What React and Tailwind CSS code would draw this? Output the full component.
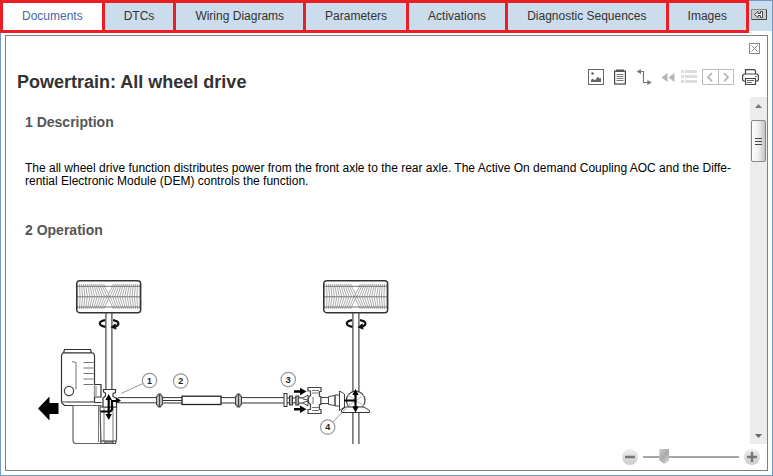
import React, { useState } from 'react';

const tabs = [
    "Documents", "DTCs", "Wiring Diagrams", "Parameters",
    "Activations", "Diagnostic Sequences", "Images",
];

const ToolButton = ({ label, children, wide }) => (
    <button type="button" title={label} aria-label={label} className={`h-4 cursor-pointer ${wide ? "w-[17px]" : "w-4"}`}>
        {children}
    </button>
);

const Toolbar = () => (
    <div className="flex shrink-0 items-center">
        <div className="flex gap-2">
            <ToolButton label="Image">
                <svg viewBox="0 0 16 16" className="size-4" fill="none">
                    <rect x=".5" y=".5" width="15" height="15" stroke="#666" />
                    <circle cx="4.5" cy="4.5" r="1.2" fill="#555" />
                    <path d="M3 13v-2l1.500-1.500 1.800 1.500 1 0 2.700-3.500 1.200 2 1-.8 .8 1V13Z" fill="#666" />
                </svg>
            </ToolButton>
            <ToolButton label="Clipboard">
                <svg viewBox="0 0 16 16" className="size-4" fill="none">
                    <rect x="2.6" y="2" width="10.8" height="13" stroke="#444" strokeWidth="1.2" />
                    <rect x="4" y=".5" width="8" height="2.5" fill="#555" />
                    <path d="M4.5 5.5h7M4.5 7.5h7M4.5 9.5h7M4.5 11.5h7" stroke="#777" />
                </svg>
            </ToolButton>
            <ToolButton label="Route">
                <svg viewBox="0 0 16 16" className="size-4" fill="none">
                    <path d="M4 2.5h3.5v11H12" stroke="#777" strokeWidth="1.2" />
                    <path d="M.5 2.5 5 0v5ZM15.8 13.5l-4.5-2.5v5Z" fill="#777" />
                </svg>
            </ToolButton>
            <ToolButton label="Back">
                <svg viewBox="0 0 16 16" className="size-4" fill="#b5b5b5">
                    <path d="M1.5 8.5l6-4.5v9ZM8.500 8.500l6-4.500v9Z" />
                </svg>
            </ToolButton>
        </div>
        <div className="ml-[5px] flex">
            <ToolButton label="List">
                <svg viewBox="0 0 16 16" className="size-4" fill="#ddd">
                    <path d="M0 1h3v3H0ZM0 6h3v3H0ZM0 11h3v3H0ZM4 1h12v3H4ZM4 6h12v3H4ZM4 11h12v3H4Z" />
                </svg>
            </ToolButton>
        </div>
        <div className="ml-[5px] flex">
            <ToolButton label="Previous">
                <svg viewBox="0 0 16 16" className="size-4" fill="none">
                    <rect x=".5" y=".5" width="16" height="15" stroke="#bbb" />
                    <path d="M10 4 6 8.2l4 4.2" stroke="#b5b5b5" strokeWidth="1.8" />
                </svg>
            </ToolButton>
            <ToolButton label="Next">
                <svg viewBox="0 0 16 16" className="size-4" fill="none">
                    <rect x=".5" y=".5" width="15" height="15" stroke="#bbb" />
                    <path d="m6 4 4 4.2-4 4.2" stroke="#b5b5b5" strokeWidth="1.8" />
                </svg>
            </ToolButton>
        </div>
        <div className="ml-2 flex">
            <ToolButton label="Print" wide>
                <svg viewBox="0 0 17 16" className="h-4 w-[17px]" fill="none" stroke="#444" strokeWidth="1.2">
                    <path d="M3.5 5V.6h9l1 1.400V5" />
                    <path d="M3.5 12h-2L.6 11V6.500L2 5h13l1.400 1.500V11l-.9 1h-2" />
                    <path d="M3.5 9.500h10v6h-10Z" fill="#fff" />
                    <path d="M5 11.500h7M5 13.500h5" stroke="#666" />
                    <path d="M13 7.500h1.500" />
                </svg>
            </ToolButton>
        </div>
    </div>
);

// herringbone tread, steep at the shoulders and leaning in towards the centre
const treads = [...Array(28)].map((_, i) => {
    const side = i < 14 ? -1 : 1;
    const step = i % 14;
    const top = 32.5 + side * (5 + step * 2);
    const middle = top - side * Math.max(0, 6 - step * 0.45);
    return `M${top} 4L${middle} 16.5L${top} 29`;
}).join('');

const Wheel = ({ x }) => (
    <g transform={`translate(${x} 280)`} fill="none">
        <path d={treads} stroke="#999" strokeWidth=".8" />
        <path d="M.5 6.3h64M.5 16.8h64M.5 27h64" stroke="#555" strokeWidth=".8" />
        <rect x=".7" y=".7" width="64" height="32" rx="3" stroke="#333" strokeWidth="1.4" />
    </g>
);

const SpinArrow = ({ x }) => (
    <g transform={`translate(${x} 323.5)`} fill="none" stroke="#111" strokeWidth="2.2">
        <path d="M-4-3.3C-11-2-11 2-3.5 3.300" />
        <path d="M4-3.3C11-2 11 2 5 3.200" />
        <path d="m1.500 3.800 5-4 1 6.500Z" fill="#111" stroke="none" />
    </g>
);

const Callout = ({ x, y, n }) => (
    <g>
        <circle cx={x} cy={y} r="7.2" fill="#fff" stroke="#999" strokeWidth="1.2" />
        <text x={x} y={y + 3} textAnchor="middle" fontSize="9" fontWeight="bold" fill="#222" fontFamily="Liberation Sans, sans-serif">{n}</text>
    </g>
);

const Flange = ({ x }) => (
    <g fill="#bbb" stroke="#444">
        <path d={`M${x - 3} 396h1.500v-2h3v2h1.500v9h-1.500v2h-3v-2h-1.500Z`} />
        <path d={`M${x} 394v13`} />
    </g>
);

const DrivelineDiagram = () => (
    <svg viewBox="30 275 370 169" className="ml-[5px] h-[169px] w-[370px] max-w-full" role="img" aria-label="All wheel drive driveline">
        <Wheel x={76} />
        <Wheel x={323} />

        <g fill="none" stroke="#444" strokeWidth="1.2">
            <path d="M105.900 313v76M111.900 313v76" />
            <path d="M352.900 313v131M358.900 313v131" />
        </g>
        <SpinArrow x={109} />
        <SpinArrow x={356} />

        {/* engine and gearbox */}
        <g fill="#fff" stroke="#333" strokeWidth="1.2">
            <path d="M64.500 349.500h26l1 3.500h-28Z" />
            <path d="M63 353h30q1.500 1 1.500 3v46h-33v-46q0-2 1.500-3Z" />
            <path d="M94.500 384.500h6.500v12.500h-6.500M61.500 402.500l3 3H101M94.500 402.500h7" />
            <path d="M73 405.500v35q0 3 3 3h25v-38Z" stroke="#666" />
            <path d="M100 407h16.500v32l-1 4.500H101Z" stroke="#555" />
            <path d="M103.500 389.500h12v3l-2.500 1v3l3.500 2v8.500h-13.500v-9l2.500-2v-3l-2-1Z" />
            <circle cx="69" cy="391" r="4.600" stroke="#444" />
        </g>
        <g fill="none" stroke="#777">
            <path d="M72 361.500l4 1v27M83.500 362.500h10M83.500 368h10M83.500 373.500h10M83.500 379h10M83.500 384.500h10" />
            <path d="M98.500 406v36M104 408v34M113 408v34M96 386v10" />
            <path d="M101 441h15M105 444v-2h8v2" stroke="#333" />
        </g>

        {/* propeller shaft */}
        <g fill="#fff" stroke="#333">
            <path d="M118 397.600h38M118 402.800h38M162 397.600h20M162 400.500h20M162 403h20M221 397.600h14M221 403h14M242 397.600h42M242 403h42M287 398h17M287 402.800h17" />
            <rect x="182" y="396.200" width="39" height="8.300" stroke="#222" strokeWidth="1.3" />
            <rect x="284" y="393.500" width="3" height="13" />
            <rect x="289.500" y="396" width="3" height="9" fill="#aaa" />
            <rect x="295.800" y="396" width="3" height="9" fill="#aaa" />
        </g>
        <Flange x={159.5} />
        <Flange x={238.5} />

        {/* coupling and rear axle */}
        <g fill="#fff" stroke="#444">
            <path d="M299 398h4l5-3v11l-5-3h-4M303 399l7 1.500-7 2" />
            <path d="M308 387.500h13v4h-1.500v5h1.500v8h-1.500v5h1.500v4h-13v-4h2.500v-5l-2-2v-5l2-2v-4.500H308Z" strokeWidth="1.2" />
            <path d="M312 390.500h7M312 393h7M312 407.500h7M312 410.500h7M313 397v7" stroke="#777" />
            <path d="M321 397.500h7.500v6H321ZM328.500 396.500l6.500-1v10l-6.500-1ZM335 395h4.500v11H335Z" />
            <circle cx="355.700" cy="400.500" r="9.300" stroke="#444" strokeWidth="1.2" />
            <path d="M348 395l16 11M348 406l16-11" stroke="#bbb" />
            <path d="M339.500 391l5 3v13l-5 3.500Z" />
            <path d="M345 407h19l5.500 3.500v2h-28v-2Z" stroke="#333" />
        </g>

        <g fill="none" stroke="#999">
            <path d="M121 393.500 143 383.500" />
            <path d="M333 422 350 404" />
        </g>

        {/* torque flow */}
        <g fill="#000">
            <path d="M38 408.500 49.500 396.500v6.500h9v11h-9v6.500Z" />
            <path d="M294 390.200h6v-2.500l6.500 3.800-6.500 3.800v-2.500h-6ZM294 407.900h6v-2.500l6.500 3.800-6.500 3.800v-2.500h-6Z" />
            <path d="m108.700 394 3.200 6h-6.400ZM108.700 420l3.200-6h-6.400ZM121 400.500l-5-3.200v6.400Z" />
            <path d="m355.500 389 3.200 6h-6.400ZM355.500 412.500l3.200-6h-6.400Z" />
        </g>
        <g fill="none" stroke="#000" strokeWidth="2.2">
            <path d="M108.700 398v18M100.500 411.500h10l1.500-2v-8.500h5" />
            <path d="M355.500 393v16M344 400.500h11.500" />
        </g>

        <Callout x={149.5} y={380.5} n="1" />
        <Callout x={180.7} y={381} n="2" />
        <Callout x={288.3} y={379.5} n="3" />
        <Callout x={327.7} y={427} n="4" />
    </svg>
);

const ScrollBar = () => (
    <div className="flex w-[17px] shrink-0 flex-col bg-[#ececec]">
        <button type="button" aria-label="Scroll up" className="flex h-[17px] items-center justify-center">
            <svg viewBox="0 0 7 4" className="h-1 w-[7px]"><path d="M0 4 3.500 0 7 4Z" fill="#777" /></svg>
        </button>
        <div className="flex-1 pt-[6px]">
            <div className="mx-px flex h-[42px] flex-col items-center justify-center gap-[2px] rounded-xs border border-[#888] bg-linear-to-r from-white via-[#eee] to-[#c4c4c4]">
                <span className="h-px w-[7px] bg-[#444]"></span>
                <span className="h-px w-[7px] bg-[#444]"></span>
                <span className="h-px w-[7px] bg-[#444]"></span>
            </div>
        </div>
        <button type="button" aria-label="Scroll down" className="flex h-[17px] items-center justify-center">
            <svg viewBox="0 0 7 4" className="h-1 w-[7px]"><path d="M0 0h7L3.500 4Z" fill="#666" /></svg>
        </button>
    </div>
);

const App = () => {

    const [activeTab, setActiveTab] = useState("Documents");
    const [zoom, setZoom] = useState(19);

    return (
        <div className="flex h-screen flex-col border border-t-0 border-[#7199c6] bg-white font-['Liberation_Sans',Arial,sans-serif] text-xs text-black">
            <div className="-ml-px flex items-start">
                <nav className="flex border-3 border-l-0 border-[#ee1c23]">
                    {tabs.map((tab) => (
                        <button key={tab} type="button" onClick={() => setActiveTab(tab)}
                            className={`h-[27px] cursor-pointer border-l-3 border-[#ee1c23] px-[19px] pb-[2px] whitespace-nowrap ${tab === activeTab ? "bg-white text-[#4668a8]" : "bg-[#cbdcec] text-[#333]"}`}>
                            {tab}
                        </button>
                    ))}
                </nav>
                <div className="flex h-[31px] flex-1 items-center border-t border-[#7199c6] bg-[#cbdcec] pl-[2px]">
                    <button type="button" aria-label="Collapse" className="-mt-1 cursor-pointer">
                        <svg viewBox="0 0 16 11" className="h-[11px] w-4">
                            <rect x=".5" y=".5" width="15" height="10" fill="#ccc" stroke="#888" />
                            <path d="M1 10.500h14.500V1" fill="none" stroke="#444" />
                            <path d="M3.500 5.500 7 2.500v2h2.500v-2h2v6h-2v-2H7v2Z" fill="#fff" stroke="#333" strokeWidth=".9" />
                        </svg>
                    </button>
                </div>
            </div>

            <main className="mx-1 mt-[2px] mb-1 flex min-h-0 flex-1 flex-col border border-[#808080]">
                <div className="flex justify-end pt-[7px] pr-[7px]">
                    <button type="button" aria-label="Close" className="cursor-pointer">
                        <svg viewBox="0 0 11 11" className="size-[11px]" fill="none" stroke="#888">
                            <rect x=".5" y=".5" width="10" height="10" />
                            <path d="m2.500 2.500 6 6M8.500 2.500l-6 6" />
                        </svg>
                    </button>
                </div>
                <div className="flex items-start justify-between pt-[15px] pr-2 pl-[11px]">
                    <h1 className="h-7 text-lg leading-[26px] font-bold text-[#333]">Powertrain: All wheel drive</h1>
                    <Toolbar />
                </div>
                <div className="flex min-h-0 flex-1">
                    <article className="min-w-0 flex-1 overflow-hidden pt-[15px] pr-3 pl-[19px]">
                        <h2 className="text-sm leading-5 font-bold text-[#555]">1 Description</h2>
                        <p className="mt-[30px] leading-[13px]">
                            The all wheel drive function distributes power from the front axle to the rear axle. The Active On demand Coupling AOC and the Diffe&shy;rential Electronic Module (DEM) controls the function.
                        </p>
                        <h2 className="mt-8 text-sm leading-5 font-bold text-[#555]">2 Operation</h2>
                        <div className="mt-[35px]">
                            <DrivelineDiagram />
                        </div>
                    </article>
                    <ScrollBar />
                </div>
                <div className="flex h-[26px] shrink-0 items-center justify-end gap-[5px] pr-[7px]">
                    <button type="button" aria-label="Zoom out" className="flex size-4 cursor-pointer items-center justify-center rounded-full bg-linear-to-b from-[#eee] to-[#ccc]">
                        <svg viewBox="0 0 10 10" className="size-[10px]"><path d="M0 5h10" stroke="#777" strokeWidth="2.5" /></svg>
                    </button>
                    <input type="range" aria-label="Zoom" min="0" max="100" value={zoom} onChange={(e) => setZoom(Number(e.target.value))}
                        className="h-4 w-24 cursor-pointer appearance-none bg-transparent [&::-webkit-slider-runnable-track]:h-0.5 [&::-webkit-slider-runnable-track]:bg-[#a6a6a6] [&::-webkit-slider-thumb]:-mt-[7px] [&::-webkit-slider-thumb]:h-[15px] [&::-webkit-slider-thumb]:w-[10px] [&::-webkit-slider-thumb]:appearance-none [&::-webkit-slider-thumb]:bg-linear-135 [&::-webkit-slider-thumb]:from-[#ccc] [&::-webkit-slider-thumb]:via-[#aaa] [&::-webkit-slider-thumb]:to-[#ddd] [&::-webkit-slider-thumb]:[clip-path:polygon(0_0,100%_0,100%_75%,50%_100%,0_75%)]" />
                    <button type="button" aria-label="Zoom in" className="flex size-4 cursor-pointer items-center justify-center rounded-full bg-linear-to-b from-[#eee] to-[#ccc]">
                        <svg viewBox="0 0 10 10" className="size-[10px]"><path d="M0 5h10M5 0v10" stroke="#777" strokeWidth="2.5" /></svg>
                    </button>
                </div>
            </main>
        </div>
    )
}

export default App
